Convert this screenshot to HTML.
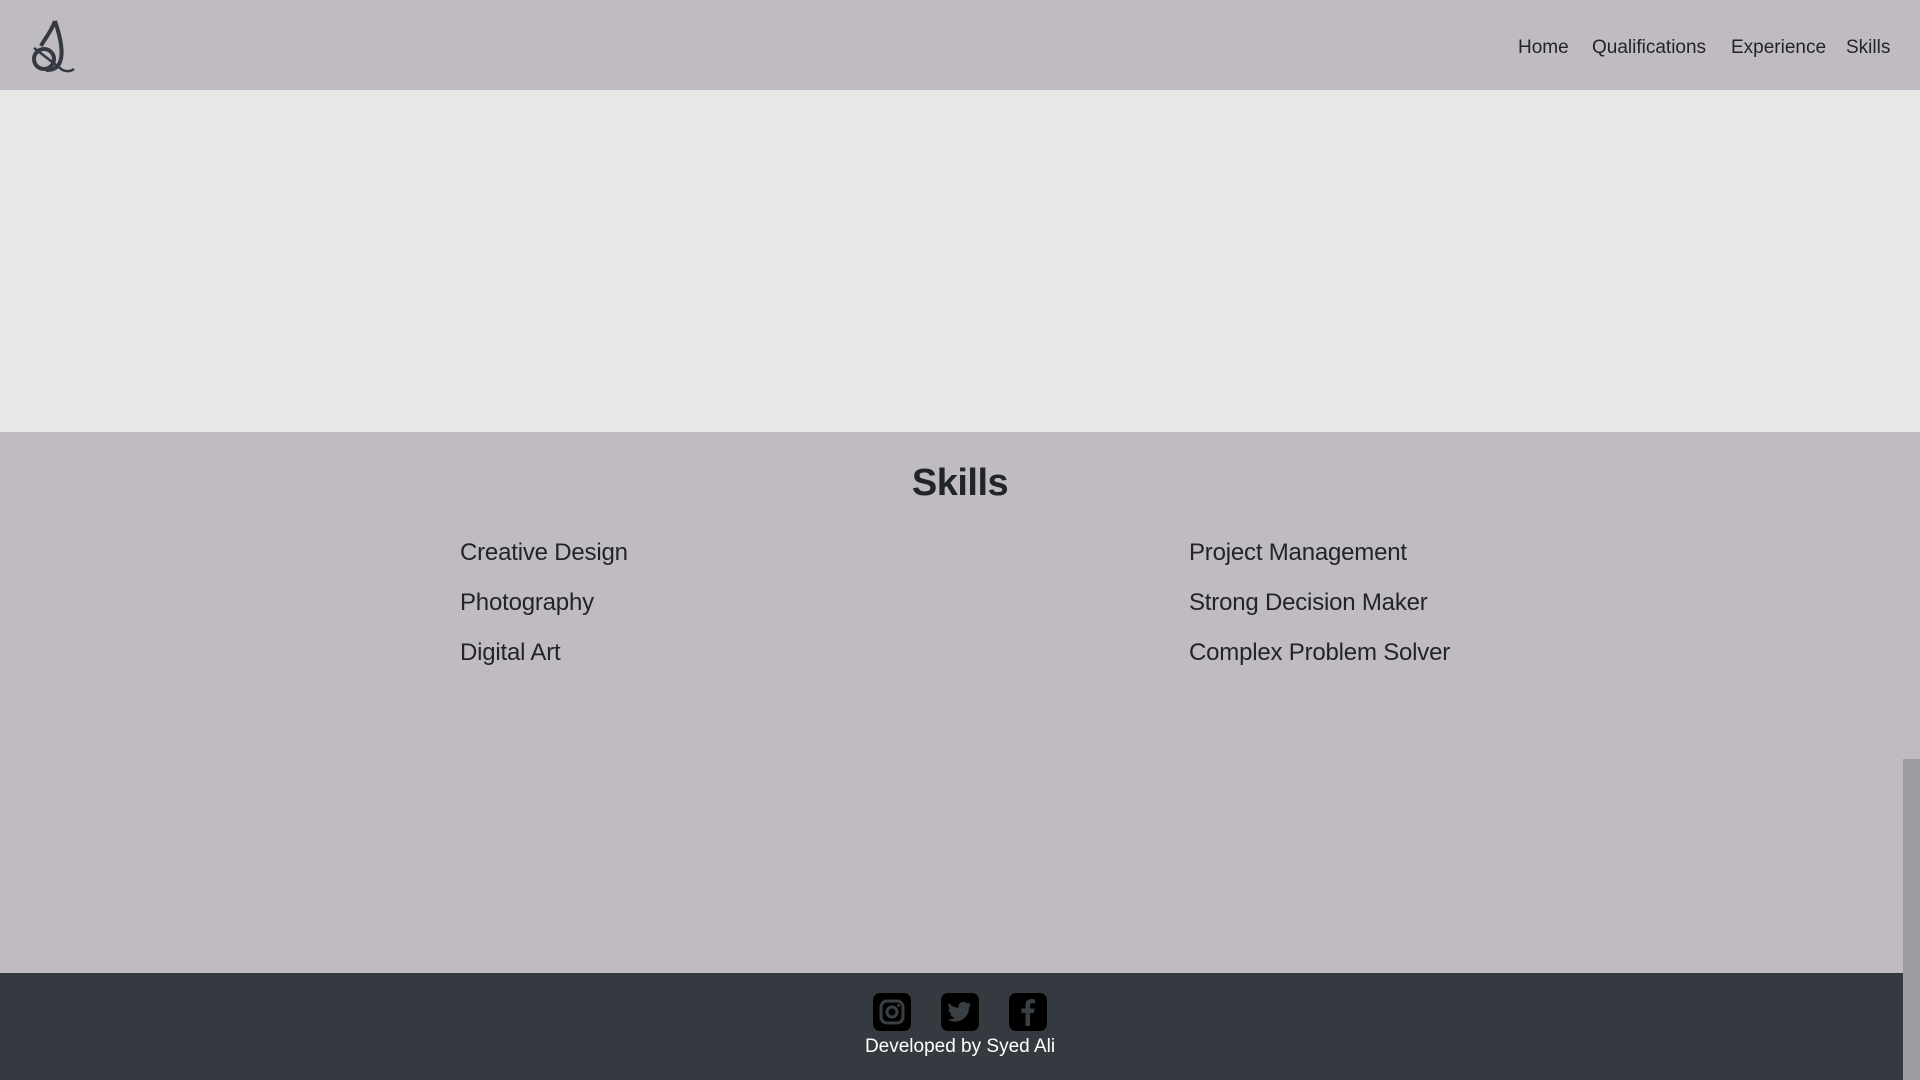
<!DOCTYPE html>
<html><head><style>
*{margin:0;padding:0;box-sizing:border-box}
body{width:1920px;height:1080px;overflow:hidden;background:#c0bbc2;font-family:"Liberation Sans",sans-serif;color:#212529;position:relative}
.nav{position:absolute;left:0;top:0;width:1920px;height:90px;background:#c0bbc2}
.nav a{position:absolute;top:37px;font-size:19px;color:#212529;text-decoration:none}
.hero{position:absolute;left:0;top:90px;width:1920px;height:342px;background:#e7e7e5}
h2{position:absolute;top:462px;width:1920px;text-align:center;font-size:38px;font-weight:bold;letter-spacing:-0.5px}
.sk{position:absolute;font-size:24px;letter-spacing:-0.2px}
.foot{position:absolute;left:0;top:973px;width:1920px;height:107px;background:#343a40}
.ic{position:absolute;top:20px;width:38px;height:38px;background:#000;border-radius:7px}
.ft{position:absolute;top:63px;width:1920px;text-align:center;color:#fff;font-size:19px}
.sb{position:absolute;right:0;top:759px;width:17px;height:321px;background:#a09ca3}
</style></head><body>
<div class="nav">
<svg style="position:absolute;left:22px;top:16px" width="56" height="58" viewBox="0 0 56 58"><path d="M33 5 C29 16 22 24 19 30 M33 5 C38 20 42 36 38 46 C35 54 28 54 24 54" fill="none" stroke="#343a40" stroke-width="4"/><path d="M12 32 L38 52 C42 56 48 56 52 53" stroke="#343a40" stroke-width="2.5" fill="none"/><ellipse cx="22" cy="43" rx="10" ry="10" fill="none" stroke="#343a40" stroke-width="4"/></svg>
<a style="left:1518px">Home</a>
<a style="left:1592px">Qualifications</a>
<a style="left:1731px">Experience</a>
<a style="left:1846px">Skills</a>
</div>
<div class="hero"></div>
<h2>Skills</h2>
<div class="sk" style="left:460px;top:539px">Creative Design</div>
<div class="sk" style="left:460px;top:589px">Photography</div>
<div class="sk" style="left:460px;top:639px">Digital Art</div>
<div class="sk" style="left:1189px;top:539px">Project Management</div>
<div class="sk" style="left:1189px;top:589px">Strong Decision Maker</div>
<div class="sk" style="left:1189px;top:639px">Complex Problem Solver</div>
<div class="foot">
<div class="ic" style="left:873px"><svg width="38" height="38" viewBox="0 0 38 38"><rect x="8" y="8" width="22" height="22" rx="6" fill="none" stroke="#3a3f44" stroke-width="3"/><circle cx="19" cy="19" r="5" fill="none" stroke="#3a3f44" stroke-width="3"/><circle cx="25.5" cy="12.5" r="1.5" fill="#3a3f44"/></svg></div>
<div class="ic" style="left:941px"><svg width="38" height="38" viewBox="0 0 38 38"><path d="M30 11c-1 .5-2 .7-3 .8 1-.6 2-1.6 2.2-2.7-1 .6-2 1-3.2 1.2a5 5 0 0 0-8.5 4.5C13.5 14.6 10 12.8 8 10c-1.4 2.3-.5 5 1.5 6.5-.8 0-1.6-.3-2.2-.6 0 2.4 1.7 4.4 4 4.9-.7.2-1.5.2-2.2.1.6 2 2.5 3.4 4.6 3.5A10 10 0 0 1 6.5 26.5 14 14 0 0 0 28 14.5V14c1-.7 1.5-1.6 2-3z" fill="#3a3f44"/></svg></div>
<div class="ic" style="left:1009px"><svg width="38" height="38" viewBox="0 0 38 38"><path d="M21 33V20h4l.6-4.5H21v-3c0-1.3.4-2.2 2.3-2.2H26V6.3C25.5 6.2 24 6 22.5 6 19 6 16.5 8 16.5 12v3.5h-4V20h4v13z" fill="#3a3f44"/></svg></div>
<div class="ft">Developed by Syed Ali</div>
</div>
<div class="sb"></div>
</body></html>
